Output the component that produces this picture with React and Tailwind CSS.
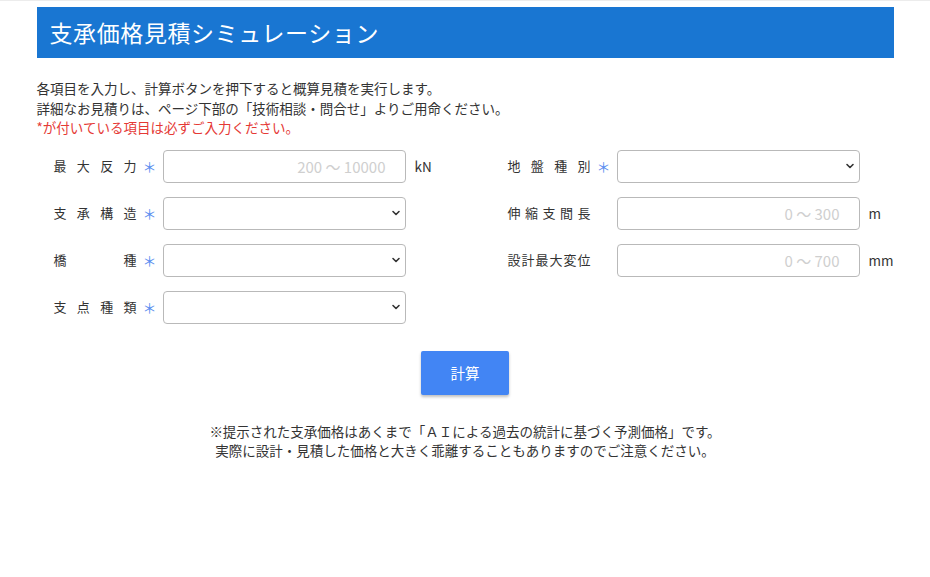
import React from 'react'

const font = { fontFamily: '"Noto Sans CJK JP", "Noto Sans", sans-serif' }

function Chevron() {
  return (
    <svg className="pointer-events-none absolute right-[5px] top-1/2 -translate-y-1/2" width="10" height="10" viewBox="0 0 10 10">
      <path d="M2 3.5 L5 6.5 L8 3.5" fill="none" stroke="#333" strokeWidth="1.6" strokeLinecap="round" strokeLinejoin="round" />
    </svg>
  )
}

function Field({ label, required, type, placeholder, unit }) {
  return (
    <div className="flex items-center h-[33px]">
      <span className="w-[83px] text-[13px] text-[#333] text-justify [text-align-last:justify] whitespace-nowrap">{label}</span>
      <span className="w-[26px] text-center text-[14px] text-[#5b8def]">{required ? '＊' : ''}</span>
      {type === 'select' ? (
        <div className="relative w-[243px] h-[33px]">
          <select className="appearance-none w-full h-full border border-[#b9b9b9] rounded-[4px] bg-white px-2 text-[13px]"></select>
          <Chevron />
        </div>
      ) : (
        <input
          className="w-[243px] h-[33px] border border-[#b9b9b9] rounded-[4px] bg-white pl-2 pr-[19px] text-right text-[15px] placeholder:text-[#cfcfcf]"
          placeholder={placeholder}
        />
      )}
      {unit && <span className="ml-[9px] text-[13.5px] text-[#333]">{unit}</span>}
    </div>
  )
}

export default function App() {
  return (
    <div className="min-h-[577px] bg-white border-t border-[#ececec]" style={font}>
      <div className="mx-auto w-[857px] pt-[6px]">
        <div className="h-[51px] bg-[#1976d2] flex items-center px-[13px]">
          <h1 className="text-white text-[23px] tracking-[0.6px]">支承価格見積シミュレーション</h1>
        </div>

        <div className="mt-[21px] text-[13.5px] leading-[19.5px] text-[#333]">
          <p>各項目を入力し、計算ボタンを押下すると概算見積を実行します。</p>
          <p>詳細なお見積りは、ページ下部の「技術相談・問合せ」よりご用命ください。</p>
          <p className="text-[#e53935]">*が付いている項目は必ずご入力ください。</p>
        </div>

        <div className="mt-[12px] pl-[17px] grid grid-cols-[454px_1fr]">
          <div className="flex flex-col gap-[14px]">
            <Field label="最大反力" required placeholder="200 ～ 10000" unit="kN" />
            <Field label="支承構造" required type="select" />
            <Field label="橋種" required type="select" />
            <Field label="支点種類" required type="select" />
          </div>
          <div className="flex flex-col gap-[14px]">
            <Field label="地盤種別" required type="select" />
            <Field label="伸縮支間長" placeholder="0 ～ 300" unit="m" />
            <Field label="設計最大変位" placeholder="0 ～ 700" unit="mm" />
          </div>
        </div>

        <div className="mt-[27px] flex justify-center">
          <button className="w-[88px] h-[44px] bg-[#4285f4] text-white text-[14.5px] rounded-[2px] shadow-[0_2px_3px_rgba(0,0,0,0.25)]">計算</button>
        </div>

        <div className="mt-[27px] text-center text-[13.5px] leading-[19.5px] text-[#333]">
          <p>※提示された支承価格はあくまで「ＡＩによる過去の統計に基づく予測価格」です。</p>
          <p>実際に設計・見積した価格と大きく乖離することもありますのでご注意ください。</p>
        </div>
      </div>
    </div>
  )
}
